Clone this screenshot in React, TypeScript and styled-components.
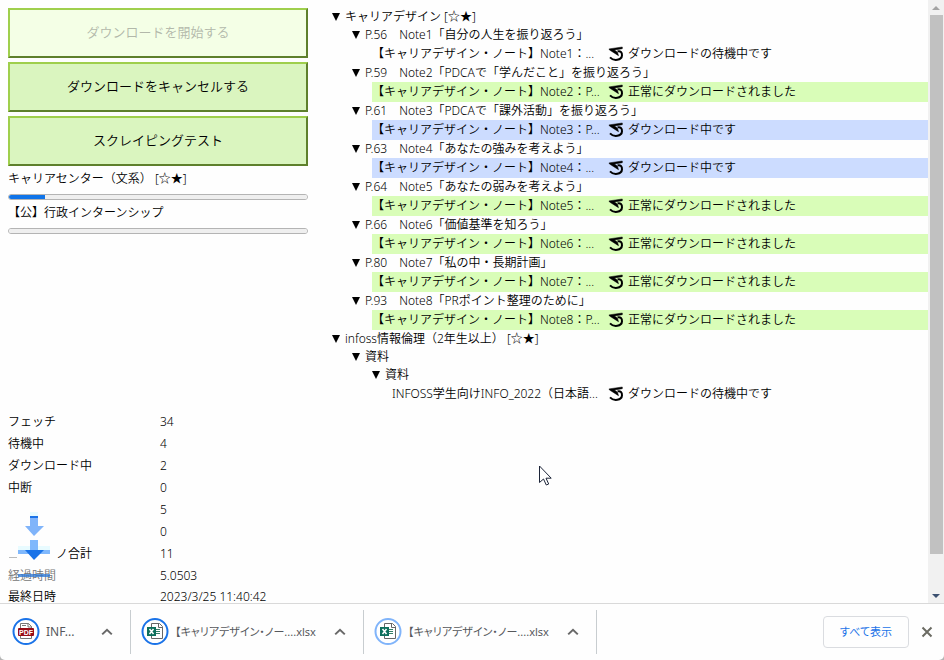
import React from "react";
import styled, { createGlobalStyle } from "styled-components";

const Global = createGlobalStyle`
  * { box-sizing: border-box; }
  body {
    margin: 0;
    background: #b4b4b4;
    color: #000;
    font: 350 12px/18px "Noto Sans", "Noto Sans CJK JP", sans-serif;
  }
`;

const Window = styled.div`
  display: flex;
  flex-direction: column;
  height: 100vh;
  overflow: hidden;
  background: #fefefe;
  border-radius: 0 0 5px 5px;
`;

const Main = styled.main`
  display: flex;
  flex: 1;
  min-height: 0;
`;

const Sidebar = styled.section`
  display: flex;
  flex-direction: column;
  flex: 0 0 300px;
  margin: 8px 24px 0 8px;
`;

const ActionButton = styled.button`
  flex: none;
  height: 50px;
  margin-bottom: 4px;
  padding: 0 0 2px;
  border: 2px solid;
  border-color: #9fcf4c #5e802c #5e802c #9fcf4c;
  background: #daf5bf;
  color: #000;
  font: 350 13px/18px "Noto Sans", "Noto Sans CJK JP", sans-serif;

  &:disabled {
    background: #f4ffe6;
    color: #b2b8aa;
  }
`;

const Job = styled.label`
  display: flex;
  flex-direction: column;
  height: 34px;
`;

const Meter = styled.progress`
  appearance: none;
  width: 100%;
  height: 6px;
  margin-top: 6px;
  border: 1px solid #b4b4b4;
  border-radius: 3px;
  background: #efefef;
  overflow: hidden;

  &::-webkit-progress-bar { background: #efefef; }
  &::-webkit-progress-value { background: #1074e8; }
`;

const StatsArea = styled.div`
  position: relative;
  margin-top: auto;
`;

const Stats = styled.table`
  border-collapse: collapse;
  width: 100%;

  tr:last-child > * {
    height: 16px;
    padding-top: 4px;
    line-height: 12px;
  }
`;

const StatName = styled.th<{ $tone?: string; $inset?: boolean }>`
  width: 152px;
  height: 22px;
  padding: 0 0 0 ${(p) => (p.$inset ? 48 : 0)}px;
  text-align: left;
  font-weight: 350;
  color: ${(p) => p.$tone ?? "#000"};
`;

const StatValue = styled.td`
  padding: 0;
`;

const Falling = styled.svg`
  position: absolute;
  left: 0;
  top: 91px;
`;

const Tree = styled.section`
  flex: 1;
  min-width: 0;
  padding-top: 8px;
`;

const Branch = styled.details<{ $nested?: boolean }>`
  margin-left: ${(p) => (p.$nested ? 20 : 0)}px;
`;

const BranchTitle = styled.summary`
  display: flex;
  align-items: center;
  gap: 4px;
  height: 18px;
  list-style: none;
  white-space: nowrap;
`;

const rowColors = { waiting: "transparent", done: "#d9fdb8", active: "#ccdcff" };
type State = keyof typeof rowColors;

const FileRow = styled.div<{ $state: State }>`
  display: flex;
  align-items: center;
  height: 20px;
  margin-left: 20px;
  background: ${(p) => rowColors[p.$state]};
  white-space: nowrap;
`;

const FileName = styled.span<{ $deep?: boolean }>`
  flex: 0 0 ${(p) => (p.$deep ? 216 : 236)}px;
`;

const FileState = styled.span`
  margin-left: 4px;
`;

const Scrollbar = styled.div`
  display: flex;
  flex-direction: column;
  flex: 0 0 16px;
  background: #f1f1f1;
`;

const ScrollButton = styled.button`
  display: flex;
  align-items: center;
  justify-content: center;
  flex: none;
  height: 15px;
  padding: 0;
  border: 0;
  background: none;
`;

const Thumb = styled.div`
  flex: 1;
  margin: 0 1px 0 2px;
  background: #c1c1c1;
`;

const ScrollGap = styled.div`
  flex: 0 0 34px;
`;

const Shelf = styled.footer`
  display: flex;
  align-items: center;
  flex: 0 0 57px;
  border-top: 1px solid #d9d9d9;
  color: #56585c;
`;

const Download = styled.div<{ $wide?: boolean }>`
  display: flex;
  align-items: center;
  flex: 0 0 ${(p) => (p.$wide ? 233 : 131)}px;
  height: 44px;
  padding: 0 17px 0 ${(p) => (p.$wide ? 10 : 12)}px;
  border-right: 1px solid #c8cdd0;
`;

const DownloadName = styled.a<{ $small?: boolean }>`
  flex: 1;
  margin-left: 6px;
  color: inherit;
  font-size: ${(p) => (p.$small ? 11 : 12)}px;
  font-weight: 400;
  text-decoration: none;
  white-space: nowrap;
  font-feature-settings: "palt";
`;

const IconButton = styled.button`
  display: flex;
  padding: 0;
  border: 0;
  background: none;
`;

const ShowAll = styled.button`
  height: 32px;
  width: 86px;
  margin: 0 12px 0 auto;
  padding: 0;
  border: 1px solid #dadce0;
  border-radius: 4px;
  background: #fefefe;
  color: #1a73e8;
  font: 11px/18px "Noto Sans", "Noto Sans CJK JP", sans-serif;
  font-feature-settings: "palt";
`;

const CloseButton = styled(IconButton)`
  margin-right: 11px;
`;

const Pointer = styled.svg`
  position: fixed;
  left: 539px;
  top: 465px;
  pointer-events: none;
`;

const Triangle = () => (
  <svg width="9" height="18" aria-hidden="true">
    <path d="M0 5h8L4 13z" />
  </svg>
);

const RetryIcon = () => (
  <svg width="16" height="16" viewBox="0 0 16 16" fill="none" stroke="#000" aria-hidden="true">
    <path d="M14.300 1 1 2.900 1.500 4 10.500 9.700 9.500 6.300 6.500 4 14.300 2.700z" fill="#000" strokeWidth=".5" />
    <path d="M9.500 5.400c3-.7 4.700 1 4.500 4-.3 5-8.300 6-12 2" strokeWidth="2" />
  </svg>
);

const Chevron = () => (
  <svg width="12" height="8" viewBox="0 0 12 8" fill="none" stroke="#686868" strokeWidth="2" aria-hidden="true">
    <path d="m1.200 6.400 4.800-4.600 4.800 4.600" />
  </svg>
);

const PdfIcon = () => (
  <svg width="28" height="28" viewBox="0 0 28 28" aria-hidden="true">
    <circle cx="14" cy="13.500" r="12.500" fill="#fff" stroke="#1a73e8" strokeWidth="2" />
    <path d="M8.500 5.500h8l3 3v12h-11z" fill="#fff" stroke="#777" />
    <path d="M16 5v4h4M10 7.500h4" fill="none" stroke="#777" />
    <rect x="6" y="10" width="16" height="8" rx="1" fill="#970b16" />
    <text x="14" y="16.500" fill="#fff" fontSize="7" fontWeight="700" fontFamily="Liberation Sans" textAnchor="middle">PDF</text>
  </svg>
);

const ExcelIcon = ({ ring }: { ring: string }) => (
  <svg width="28" height="28" viewBox="0 0 28 28" aria-hidden="true">
    <circle cx="14" cy="13.500" r="12.500" fill="#fff" stroke={ring} strokeWidth="2" />
    <path d="M10.500 5.500h8l3 3v12h-11z" fill="#fff" stroke="#666" />
    <path d="M17.500 5.500V9.500h4" fill="none" stroke="#666" />
    <path d="M15 11.500h4M15 13.500h4M15 15.500h4" stroke="#357f68" />
    <rect x="6" y="9" width="9" height="9" fill="#0e6f5c" />
    <path d="m8.500 11 4 5m0-5-4 5" stroke="#fff" strokeWidth="1.500" />
  </svg>
);

const stateText: Record<State, string> = {
  waiting: "ダウンロードの待機中です",
  done: "正常にダウンロードされました",
  active: "ダウンロード中です",
};

const notes: { title: string; file: string; state: State }[] = [
  { title: "P.56　Note1「自分の人生を振り返ろう」", file: "Note1：...", state: "waiting" },
  { title: "P.59　Note2「PDCAで「学んだこと」を振り返ろう」", file: "Note2：P...", state: "done" },
  { title: "P.61　Note3「PDCAで「課外活動」を振り返ろう」", file: "Note3：P...", state: "active" },
  { title: "P.63　Note4「あなたの強みを考えよう」", file: "Note4：...", state: "active" },
  { title: "P.64　Note5「あなたの弱みを考えよう」", file: "Note5：...", state: "done" },
  { title: "P.66　Note6「価値基準を知ろう」", file: "Note6：...", state: "done" },
  { title: "P.80　Note7「私の中・長期計画」", file: "Note7：...", state: "done" },
  { title: "P.93　Note8「PRポイント整理のために」", file: "Note8：P...", state: "done" },
];

const stats: { name: React.ReactNode; value: string; tone?: string; inset?: boolean }[] = [
  { name: "フェッチ", value: "34" },
  { name: "待機中", value: "4" },
  { name: "ダウンロード中", value: "2" },
  { name: "中断", value: "0" },
  { name: "", value: "5" },
  { name: "", value: "0" },
  { name: "ノ合計", value: "11", inset: true },
  { name: "経過時間", value: "5.0503", tone: "#777" },
  { name: "最終日時", value: "2023/3/25 11:40:42" },
];

const File = ({ name, state, deep }: { name: string; state: State; deep?: boolean }) => (
  <FileRow $state={state}>
    <FileName $deep={deep}>{name}</FileName>
    <RetryIcon />
    <FileState>{stateText[state]}</FileState>
  </FileRow>
);

const Folder = ({ title, nested, children }: { title: string; nested?: boolean; children: React.ReactNode }) => (
  <Branch open $nested={nested}>
    <BranchTitle>
      <Triangle />
      {title}
    </BranchTitle>
    {children}
  </Branch>
);

export default function App() {
  return (
    <Window>
      <Global />
      <Main>
        <Sidebar>
          <ActionButton disabled>ダウンロードを開始する</ActionButton>
          <ActionButton>ダウンロードをキャンセルする</ActionButton>
          <ActionButton>スクレイピングテスト</ActionButton>
          <Job>
            キャリアセンター（文系） [☆★]
            <Meter value={12} max={100} />
          </Job>
          <Job>
            【公】行政インターンシップ
            <Meter value={0} max={100} />
          </Job>
          <StatsArea>
            <Stats>
              <tbody>
                {stats.map((s, i) => (
                  <tr key={i}>
                    <StatName scope="row" $tone={s.tone} $inset={s.inset}>{s.name}</StatName>
                    <StatValue>{s.value}</StatValue>
                  </tr>
                ))}
              </tbody>
            </Stats>
            <Falling width="48" height="80" viewBox="0 0 48 80" aria-hidden="true">
              <path d="M22 10h8v4h-8zM10 44h32v4H10z" fill="#e8fbff" />
              <path d="M22 16h8v8h6l-10 10-9-10h5z" fill="#80b4fa" />
              <path d="M22 14h8v2h-8z" fill="#1a73e8" />
              <path d="M22 38h8v10h12v4H10v-4h12z" fill="#80b8fc" />
              <path d="M17 48h19L26 58z" fill="#1a73e8" />
              <path d="M10 72h32v3H10z" fill="#2876d5" opacity=".75" />
              <path d="M1 55.500h8" stroke="#bbb" />
            </Falling>
          </StatsArea>
        </Sidebar>
        <Tree>
          <Folder title="キャリアデザイン [☆★]">
            {notes.map((n) => (
              <Folder nested key={n.title} title={n.title}>
                <File name={"【キャリアデザイン・ノート】" + n.file} state={n.state} />
              </Folder>
            ))}
          </Folder>
          <Folder title="infoss情報倫理（2年生以上） [☆★]">
            <Folder nested title="資料">
              <Folder nested title="資料">
                <File deep name="INFOSS学生向けINFO_2022（日本語..." state="waiting" />
              </Folder>
            </Folder>
          </Folder>
        </Tree>
        <Scrollbar>
          <ScrollButton aria-label="上へ">
            <svg width="8" height="4"><path d="M0 4h8L4 0z" fill="#a3a3a3" /></svg>
          </ScrollButton>
          <Thumb />
          <ScrollGap />
          <ScrollButton aria-label="下へ">
            <svg width="8" height="4"><path d="M0 0h8L4 4z" fill="#3c5070" /></svg>
          </ScrollButton>
        </Scrollbar>
      </Main>
      <Shelf>
        <Download>
          <PdfIcon />
          <DownloadName href="#">INF...</DownloadName>
          <IconButton aria-label="メニュー"><Chevron /></IconButton>
        </Download>
        <Download $wide>
          <ExcelIcon ring="#1a73e8" />
          <DownloadName $small href="#">【キャリアデザイン・ノー....xlsx</DownloadName>
          <IconButton aria-label="メニュー"><Chevron /></IconButton>
        </Download>
        <Download $wide>
          <ExcelIcon ring="#80b4fa" />
          <DownloadName $small href="#">【キャリアデザイン・ノー....xlsx</DownloadName>
          <IconButton aria-label="メニュー"><Chevron /></IconButton>
        </Download>
        <ShowAll>すべて表示</ShowAll>
        <CloseButton aria-label="閉じる">
          <svg width="12" height="12" stroke="#6b6b63" strokeWidth="2"><path d="m1.500 1.500 9 9m0-9-9 9" /></svg>
        </CloseButton>
      </Shelf>
      <Pointer width="14" height="22" viewBox="0 0 14 22" aria-hidden="true">
        <path d="M.5 1v16.500l4-3.500 2.800 6 2.400-1-2.700-5.800h5.200z" fill="#fff" stroke="#1c2438" />
      </Pointer>
    </Window>
  );
}
